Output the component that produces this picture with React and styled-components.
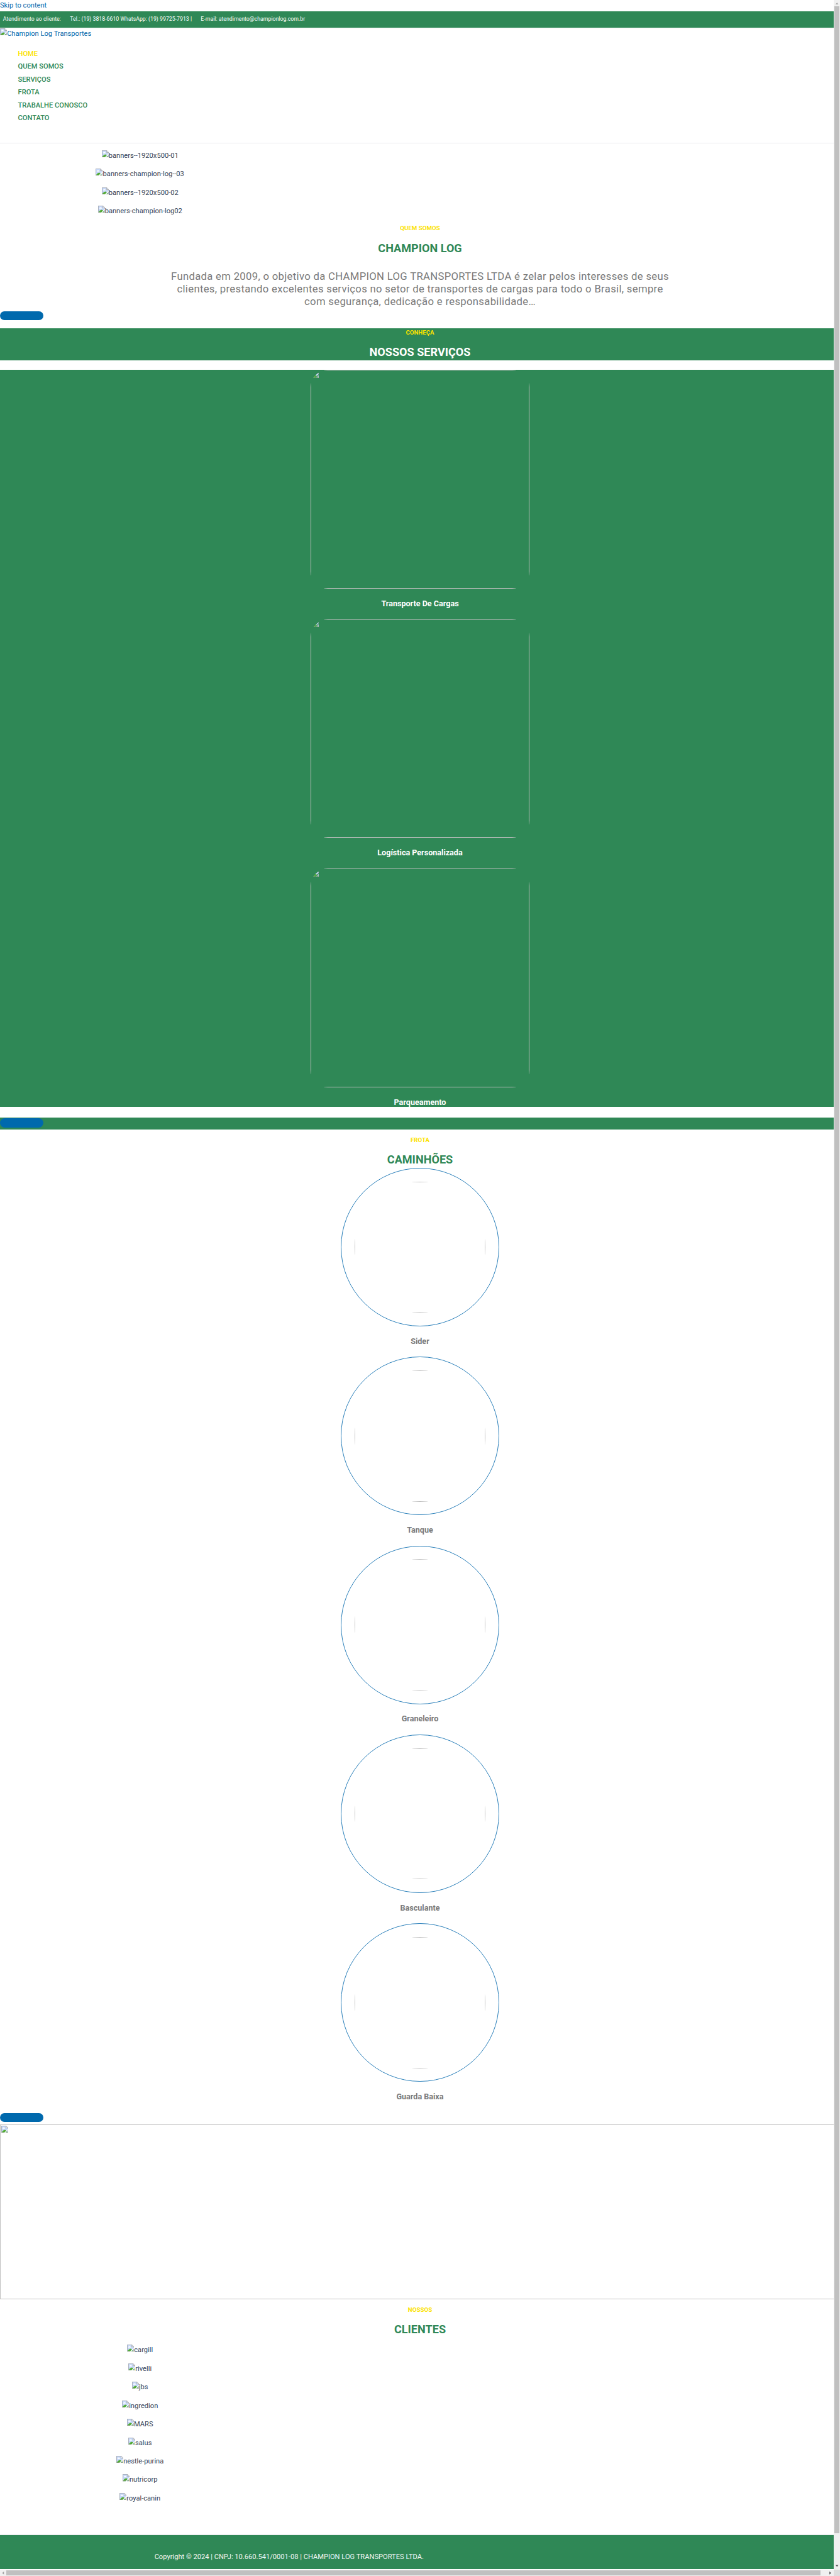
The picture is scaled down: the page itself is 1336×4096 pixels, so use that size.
import React from 'react';
import styled, { createGlobalStyle } from 'styled-components';

const S = 1336 / 1920;
const u = (n) => `${+(n * S).toFixed(3)}px`;

const GREEN = '#2f8856';
const BLUE = '#0069ad';
const YELLOW = '#fbe200';
const GREY = '#7a7a7a';

const Global = createGlobalStyle`
  *, *::before, *::after { box-sizing: border-box; }
  html, body { margin: 0; padding: 0; overflow: hidden; background: #fff; }
  h2, h4, h6, p, ul { margin: 0; padding: 0; font-weight: inherit; }
`;

const Window = styled.div`
  width: 1336px;
  height: 4096px;
  display: grid;
  grid-template: minmax(0, 1fr) ${u(15)} / minmax(0, 1fr) ${u(15)};
  overflow: hidden;
  font-family: Roboto, 'Liberation Sans', sans-serif;
  font-size: ${u(16)};
  line-height: ${u(26.4)};
  color: #334155;
`;
const Viewport = styled.div`overflow: hidden;`;
const Page = styled.div`
  width: 1336px;
  display: flex;
  flex-direction: column;
`;

const Link = styled.a`
  display: flex;
  height: ${(p) => u(p.$h)};
  color: ${BLUE};
  white-space: nowrap;
`;

const TopBar = styled.div`
  height: ${u(38)};
  padding: 0 ${u(7)} ${u(2)};
  display: flex;
  align-items: center;
  background: ${GREEN};
  border-bottom: 1px solid #e8edea;
  color: #fff;
  font-size: ${u(12.6)};
  white-space: nowrap;
`;
const Contact = styled.span`
  width: ${(p) => (p.$w ? u(p.$w) : 'auto')};
`;

const Header = styled.header`
  height: ${u(263)};
  border-bottom: 1px solid #e9ebee;
`;
const Menu = styled.ul`
  list-style: none;
  margin-top: ${u(18.6)};
  padding-left: ${u(41)};
`;
const MenuItem = styled.li`
  height: ${u(29.4)};
  line-height: ${u(29.4)};
  font-weight: 500;
  color: ${(p) => (p.$active ? YELLOW : GREEN)};
`;

const ImageList = styled.div`
  width: ${u(640)};
  height: ${(p) => u(p.$h)};
  padding-top: ${(p) => u(p.$top)};
  display: flex;
  flex-direction: column;
  align-items: center;
`;
const ImageRow = styled.div`
  height: ${u(42.35)};
  flex: none;
`;
const Missing = styled.span`
  display: flex;
  align-items: flex-start;
  white-space: nowrap;
`;
const IconSvg = styled.svg`
  display: block;
  flex: none;
  width: ${u(16)};
  height: ${u(16)};
`;

const Section = styled.section`
  height: ${(p) => u(p.$h)};
  padding-top: ${(p) => u(p.$top || 0)};
  background: ${(p) => (p.$green ? GREEN : 'transparent')};
  display: flex;
  flex-direction: column;
  align-items: center;
  flex: none;
`;
const Kicker = styled.h6`
  height: ${u(19)};
  line-height: ${u(19)};
  font-size: ${u(14)};
  font-weight: 700;
  color: ${YELLOW};
`;
const Title = styled.h2`
  margin-top: ${u(20.5)};
  height: ${u(32)};
  line-height: ${u(32)};
  font-size: ${u(26)};
  font-weight: 700;
  color: ${(p) => (p.$light ? '#fff' : GREEN)};
`;
const Lead = styled.p`
  width: ${u(1200)};
  margin-top: ${u(34.5)};
  font-size: ${u(24)};
  line-height: ${u(28.6)};
  letter-spacing: ${u(0.45)};
  text-align: center;
  color: ${GREY};
`;
const Line = styled.span`
  display: block;
  white-space: nowrap;
`;

const ButtonRow = styled.div`
  height: ${(p) => u(p.$h)};
  padding-top: ${(p) => u(p.$top)};
  background: ${(p) => (p.$green ? GREEN : 'transparent')};
  flex: none;
`;
const Pill = styled.button`
  display: block;
  width: ${u(99)};
  height: ${u(21)};
  padding: 0;
  border: 0;
  border-radius: ${u(30)};
  background: ${BLUE};
`;
const Gap = styled.div`
  height: ${(p) => u(p.$h)};
  flex: none;
`;

const Card = styled.article`
  height: ${(p) => u(p.$h)};
  flex: none;
  display: flex;
  flex-direction: column;
  align-items: center;
`;
const Frame = styled.div`
  width: ${(p) => u(p.$size)};
  height: ${(p) => u(p.$size)};
  border-radius: ${(p) => p.$radius};
  overflow: hidden;
  flex: none;
`;
const FrameEdge = styled.div`
  width: 100%;
  height: 100%;
  padding: ${u(1)};
  border: 1px solid #c0c0c0;
`;
const Ring = styled.div`
  display: grid;
  place-items: center;
  width: ${u(362)};
  height: ${u(362)};
  border: 1px solid #2b80ba;
  border-radius: 50%;
`;
const CardTitle = styled.h4`
  margin-top: ${u(22.8)};
  height: ${u(24)};
  line-height: ${u(24)};
  font-size: ${u(18.1)};
  font-weight: 700;
  color: ${(p) => (p.$light ? '#fff' : GREY)};
`;

const WideImage = styled.div`
  width: 100%;
  height: ${u(400)};
  padding: ${u(1)};
  border: 1px solid #c0c0c0;
  flex: none;
`;

const Footer = styled.footer`
  height: ${u(80)};
  border-top: 1px solid #e3e6ea;
  padding: ${u(37)} 0 0 ${u(353)};
  background: ${GREEN};
  color: #f4f8f5;
  white-space: nowrap;
`;

const VTrack = styled.div`
  background: #f0f0f0;
  display: flex;
  flex-direction: column;
  align-items: center;
`;
const VThumb = styled.div`
  width: ${u(11)};
  height: ${u(5774)};
  background: #c0c0c0;
  flex: none;
`;
const HTrack = styled.div`
  background: #f0f0f0;
  display: flex;
  align-items: center;
`;
const HThumb = styled.div`
  width: ${u(1860)};
  height: ${u(11)};
  margin-right: auto;
  background: #c0c0c0;
`;
const Corner = styled.div`background: #dcdcdc;`;
const ArrowSvg = styled.svg`
  display: block;
  flex: none;
  width: ${u(15)};
  height: ${u(15)};
`;

const BrokenIcon = () => (
  <IconSvg viewBox="0 0 16 16">
    <path d="M0 0H11L16 5V6.6L6.8 16H0Z" fill="#c6d7f7" />
    <path d="M3 7a1.5 1.5 0 0 1 1-2.3 1.9 1.9 0 0 1 3.5 0A1.3 1.3 0 0 1 8 7Z" fill="#fff" />
    <path d="M1 15.5C2.5 12 5.5 9.4 8.6 9.2L11.4 11.3 6.8 16H1Z" fill="#52ab32" />
    <path d="M16 9.2V16H9.4Z" fill="#c6d7f7" />
    <path d="M12.6 13L15 15.3H10.2Z" fill="#52ab32" />
    <path d="M0.5 16V0.5H11M15.5 5V7M15.5 9.6V15.5H9.8M0 15.5H7.2" fill="none" stroke="#989898" />
    <path d="M11 0.5V5H15.5Z" fill="#fff" stroke="#989898" />
  </IconSvg>
);
const MissingImage = ({ alt }) => (
  <Missing><BrokenIcon />{alt}</Missing>
);
const Arrow = ({ d, fill = '#505050' }) => (
  <ArrowSvg viewBox="0 0 15 15"><path d={d} fill={fill} /></ArrowSvg>
);

const menu = ['HOME', 'QUEM SOMOS', 'SERVIÇOS', 'FROTA', 'TRABALHE CONOSCO', 'CONTATO'];
const banners = ['banners--1920x500-01', 'banners-champion-log--03', 'banners--1920x500-02', 'banners-champion-log02'];
const services = ['Transporte De Cargas', 'Logística Personalizada', 'Parqueamento'];
const trucks = ['Sider', 'Tanque', 'Graneleiro', 'Basculante', 'Guarda Baixa'];
const clients = ['cargill', 'rivelli', 'jbs', 'ingredion', 'MARS', 'salus', 'nestle-purina', 'nutricorp', 'royal-canin'];

export default function App() {
  return (
    <>
      <Global />
      <Window>
        <Viewport>
          <Page>
            <Link $h={26}>Skip to content</Link>
            <TopBar>
              <Contact $w={153}>Atendimento ao cliente:</Contact>
              <Contact $w={299}>Tel.: (19) 3818-6610 WhatsApp: (19) 99725-7913 |</Contact>
              <Contact>E-mail: atendimento@championlog.com.br</Contact>
            </TopBar>
            <Header>
              <Link $h={26.4}><MissingImage alt="Champion Log Transportes" /></Link>
              <Menu>
                {menu.map((m, i) => <MenuItem key={m} $active={i === 0}>{m}</MenuItem>)}
              </Menu>
            </Header>
            <ImageList $h={185} $top={16}>
              {banners.map((b) => <ImageRow key={b}><MissingImage alt={b} /></ImageRow>)}
            </ImageList>
            <Section $h={199}>
              <Kicker>QUEM SOMOS</Kicker>
              <Title>CHAMPION LOG</Title>
              <Lead>
                <Line>Fundada em 2009, o objetivo da CHAMPION LOG TRANSPORTES LTDA é zelar pelos interesses de seus</Line>
                <Line>clientes, prestando excelentes serviços no setor de transportes de cargas para todo o Brasil, sempre</Line>
                <Line>com segurança, dedicação e responsabilidade…</Line>
              </Lead>
            </Section>
            <ButtonRow $h={39} $top={0}><Pill /></ButtonRow>
            <Section $h={74} $green>
              <Kicker>CONHEÇA</Kicker>
              <Title $light>NOSSOS SERVIÇOS</Title>
            </Section>
            <Gap $h={21} />
            <Section $h={1685} $green>
              {services.map((s) => (
                <Card key={s} $h={570}>
                  <Frame $size={500} $radius={u(40)}><FrameEdge><BrokenIcon /></FrameEdge></Frame>
                  <CardTitle $light>{s}</CardTitle>
                </Card>
              ))}
            </Section>
            <Gap $h={24} />
            <ButtonRow $h={27} $top={2} $green><Pill /></ButtonRow>
            <Section $h={2247} $top={14}>
              <Kicker>FROTA</Kicker>
              <Title>CAMINHÕES</Title>
              <Gap $h={2.5} />
              {trucks.map((t) => (
                <Card key={t} $h={431.6}>
                  <Ring><Frame $size={300} $radius="50%"><FrameEdge /></Frame></Ring>
                  <CardTitle>{t}</CardTitle>
                </Card>
              ))}
            </Section>
            <ButtonRow $h={26.5} $top={0.5}><Pill /></ButtonRow>
            <WideImage><BrokenIcon /></WideImage>
            <Section $h={86} $top={14}>
              <Kicker>NOSSOS</Kicker>
              <Title>CLIENTES</Title>
            </Section>
            <ImageList $h={451} $top={17.5}>
              {clients.map((c) => <ImageRow key={c}><MissingImage alt={c} /></ImageRow>)}
            </ImageList>
            <Footer>Copyright © 2024 | CNPJ: 10.660.541/0001-08 | CHAMPION LOG TRANSPORTES LTDA.</Footer>
          </Page>
        </Viewport>
        <VTrack>
          <Arrow d="M4 10H11L7.5 6Z" fill="#a3a3a3" />
          <VThumb />
          <Gap $h={67} />
          <Arrow d="M4 5H11L7.5 9Z" />
        </VTrack>
        <HTrack>
          <Arrow d="M9 4V11L5 7.5Z" fill="#a3a3a3" />
          <HThumb />
          <Arrow d="M6 4V11L10 7.5Z" />
        </HTrack>
        <Corner />
      </Window>
    </>
  );
}
